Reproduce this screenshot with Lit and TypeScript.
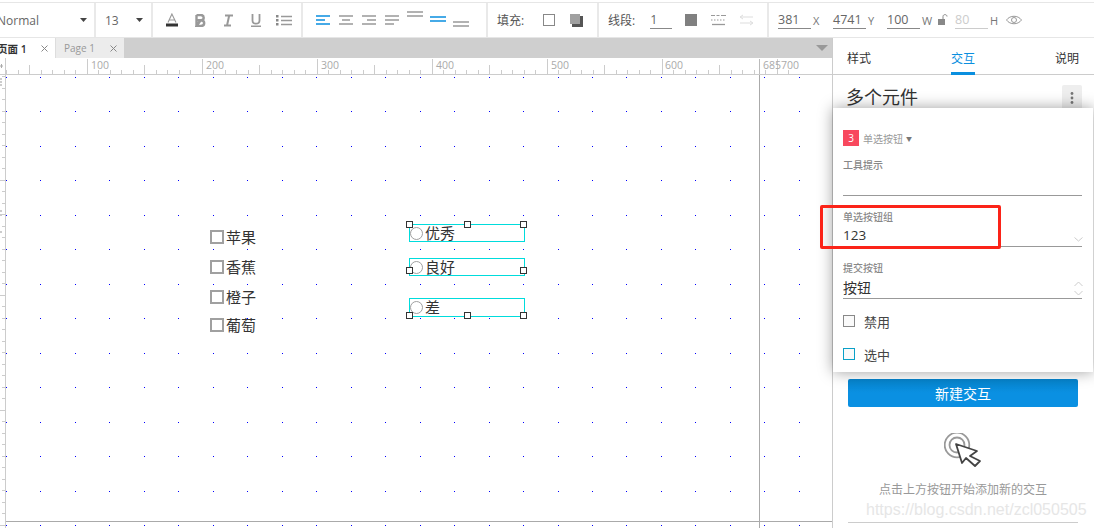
import { LitElement, html, css, svg } from "lit";
import { customElement } from "lit/decorators.js";

const range = (n: number) => Array.from({ length: n }, (_, i) => i);

const checks = [
  { label: "苹果", y: 155 },
  { label: "香蕉", y: 185 },
  { label: "橙子", y: 215 },
  { label: "葡萄", y: 243 },
];
const radios = [
  { label: "优秀", top: 149, h: 18, cy: 158 },
  { label: "良好", top: 183, h: 18, cy: 192 },
  { label: "差", top: 223, h: 19, cy: 232 },
];
const handles: [number, number][] = [
  [403, 149], [461, 149], [517, 149],
  [403, 195], [517, 195],
  [403, 240], [461, 240], [517, 240],
];

@customElement("app-root")
export class AppRoot extends LitElement {
  static styles = css`
    :host { display: block; width: 1094px; height: 528px; overflow: hidden; background: #fff; position: relative;
      font-family: "Open Sans", "Noto Sans CJK SC", sans-serif; color: #444; }
    svg { display: block; flex: none; }

    .toolbar { height: 34px; margin-top: 2px; border-top: 1px solid #e6e6e6; border-bottom: 1px solid #e6e6e6; display: flex; font-size: 12px; color: #666; box-sizing: content-box; }
    .grp { display: flex; align-items: center; border-right: 2px solid #e9e9e9; box-sizing: border-box; flex: none; }
    .g1 { width: 96px; padding-left: 0; }
    .g1 .val { margin-left: -3px; width: 83px; }
    .g2 { width: 57px; padding-left: 9px; }
    .g2 .val { width: 31px; }
    .g3 { width: 150px; padding-left: 5px; }
    .cell28 { width: 28px; display: flex; justify-content: center; }
    .g4 { width: 185px; padding-left: 8px; }
    .cell23 { width: 23px; display: flex; justify-content: center; }
    .g5 { width: 111px; padding-left: 9px; font-size: 12px; color: #555; }
    .g5 .sq1 { margin-left: 19px; }
    .g5 .sq2 { margin-left: 15px; }
    .g6 { width: 170px; padding-left: 9px; color: #555; }
    .num { border-bottom: 1px solid #888; line-height: 15px; height: 16px; margin-top: 1px; width: 33px; flex: none; color: #666; font-size: 12.5px; }
    .g6 .num { margin-left: 15px; width: 22px; }
    .g6 .s1 { margin-left: 13px; }
    .g6 .s2 { margin-left: 14px; }
    .g6 .s3 { margin-left: 13px; }
    .g7 { flex: 1; padding-left: 9px; border-right: 0; }
    .lab { width: 22px; flex: none; font-size: 11px; color: #777; padding-left: 2px; box-sizing: border-box; }
    .lab.y { width: 21px; }
    .lab.w { width: 18px; }
    .num.off { color: #ccc; border-color: #ccc; }
    .g7 .lock { margin-right: 7px; }
    .g7 .lab.h { width: 18px; }

    .main { display: flex; height: 490px; }
    .work { width: 832px; flex: none; display: flex; flex-direction: column; }
    .tabs { height: 20px; background: #cfcfcf; display: flex; flex: none; font-size: 10px; position: relative; }
    .tab { height: 20px; display: flex; align-items: center; box-sizing: border-box; flex: none; }
    .tab.on { width: 56px; background: #fff; color: #333; font-weight: 600; border-right: 1px solid #ddd; font-size: 10.5px; }
    .tab.on .t { margin-left: -3px; width: 44px; }
    .tab.off { width: 68px; background: #ececec; color: #999; padding-left: 8px; }
    .tab.off .t { width: 46px; }
    .menu { margin-left: auto; margin-right: 4px; align-self: center; }
    .ruler-top { flex: none; }
    .body { flex: 1; display: flex; min-height: 0; }
    .ruler-left { flex: none; }
    .stage { flex: 1; position: relative; overflow: hidden; background: #fff; font-size: 15px; color: #333; }
    .grid { position: absolute; left: 0; top: 0; }
    .chk { position: absolute; left: 204px; display: flex; align-items: center; height: 14px; line-height: 14px; }
    .chk i { width: 10px; height: 10px; border: 2px solid #a0a0a0; display: block; margin-right: 2px; }
    .rad { position: absolute; left: 403px; width: 116px; border: 1px solid #00dcdc; box-sizing: border-box; }
    .radio { position: absolute; left: 404px; display: flex; align-items: center; height: 16px; line-height: 16px; }
    .radio i { width: 11px; height: 11px; border: 1.5px solid #a0a0a0; border-radius: 50%; display: block; margin-right: 2px; background: #fff; }
    .hd { position: absolute; width: 5px; height: 5px; background: #fff; border: 1px solid #333; }

    .panel { width: 262px; flex: none; border-left: 1px solid #ccc; box-sizing: border-box; position: relative; }
    .ptabs { height: 37px; display: flex; justify-content: space-between; align-items: flex-end; padding: 0 15px 0 14px; border-bottom: 1px solid #ccc; box-sizing: border-box; font-size: 12px; color: #333; }
    .ptab { height: 29px; line-height: 27px; box-sizing: border-box; }
    .ptab.on { color: #0a8fdf; border-bottom: 3px solid #0a8fdf; margin-bottom: -1px; height: 30px; }
    .ttl { height: 304px; display: flex; align-items: flex-start; justify-content: space-between; padding: 10px 12px 0 13px; box-sizing: border-box; font-size: 18px; color: #333; line-height: 24px; }
    .more { width: 20px; height: 26px; background: #eee; border-radius: 2px; display: flex; align-items: center; justify-content: center; }
    .btn { margin: 0 0 0 15px; width: 230px; height: 28px; border-radius: 2px; background: linear-gradient(#0683cb, #0a90e2 50%); color: #fff; font-size: 14px; display: flex; align-items: center; justify-content: center; }
    .hint { display: flex; flex-direction: column; align-items: center; margin-left: 15px; width: 230px; border-bottom: 1px solid #ccc; height: 116px; box-sizing: border-box; }
    .hint svg { margin: 26px 0 0 2px; }
    .hint .tx { margin-top: 13px; font-size: 12px; color: #999; line-height: 16px; white-space: nowrap; }
    .mark { position: absolute; left: 33px; top: 463px; font: 16px "Liberation Sans", sans-serif; color: #e6e6e6; white-space: nowrap; }

    .pop { position: absolute; left: 0; top: 70px; width: 260px; height: 264px; background: #fff; box-shadow: 0 0 14px rgba(0,0,0,.38); padding: 22px 11px 0 10px; box-sizing: border-box; }
    .head { display: flex; align-items: center; height: 16px; font-size: 10px; color: #999; }
    .badge { width: 16px; height: 16px; background: #f8485e; color: #fff; font-size: 10px; line-height: 16px; text-align: center; margin-right: 4px; }
    .tri { font-size: 6px; margin-left: 3px; color: #777; }
    .cap { font-size: 10px; line-height: 14px; color: #888; font-weight: 500; }
    .tip { margin-top: 11px; padding-top: 1px; height: 37px; border-bottom: 1px solid #999; }
    .f2 { margin-top: 14px; height: 36px; border-bottom: 1px solid #999; position: relative; }
    .f3 { margin-top: 14px; height: 37px; border-bottom: 1px solid #999; position: relative; }
    .v { font-size: 13.5px; color: #333; line-height: 20px; margin-top: 1px; }
    .f3 .v { font-size: 14px; margin-top: 3px; }
    .arrow { position: absolute; right: -1px; bottom: 4px; }
    .f3 .arrow { bottom: 2px; }
    .cb { display: flex; align-items: center; font-size: 13px; color: #444; height: 18px; }
    .cb i { display: block; width: 10px; height: 10px; border: 1px solid #888; background: #fafafa; margin-right: 9px; }
    .cb.blue i { border-color: #0aa0c8; }
    .cb.a { margin-top: 13px; }
    .cb.b { margin-top: 15px; }

    .red { position: absolute; left: 820px; top: 205px; width: 181px; height: 44px; border: 3px solid #fb2318; border-radius: 2px; box-sizing: border-box; }
  `;

  private rulerTop() {
    const ticks = range(72).map((k) => {
      const x = Math.round(-28.3 + 11.5 * k) + 0.5;
      const h = k % 10 === 0 ? 15 : k % 5 === 0 ? 9 : 4;
      return svg`<line x1=${x} x2=${x} y1=${16 - h} y2="16" stroke="#ccc"/>`;
    });
    const nums: [string, number][] = [["100", 91], ["200", 206], ["300", 321], ["400", 436], ["500", 551], ["600", 665], ["685", 763], ["700", 781]];
    return html`<svg class="ruler-top" width="832" height="17">
      <rect x="0" y="16" width="832" height="1" fill="#ccc"/>
      ${ticks}
      <line x1="759.5" x2="759.5" y1="1" y2="16" stroke="#bbb"/>
      <rect x="5" y="0" width="1" height="17" fill="#ccc"/>
      <path d="M0 8h3M1.500 6v4" stroke="#aaa"/>
      ${nums.map(([t, x]) => svg`<text x=${x} y="11" font-size="10.5" fill="#aaa" font-family="Open Sans">${t}</text>`)}
    </svg>`;
  }

  private rulerLeft() {
    const ticks = range(42).map((k) => {
      const y = Math.round(11.5 * k + 1) + 0.5;
      const w = k % 10 === 9 ? 6 : 3;
      return svg`<line x1=${5 - w} x2="5" y1=${y} y2=${y} stroke="#ccc"/>`;
    });
    return html`<svg class="ruler-left" width="6" height="453">
      <rect x="5" width="1" height="453" fill="#ccc"/>
      ${ticks}
      <path d="M0 4h2M0 7h2M0 10h2M0 136h2M0 140h2M0 157h2" stroke="#999"/>
    </svg>`;
  }

  private stageGrid() {
    const dots = [];
    for (const i of range(24)) {
      for (const j of range(14)) {
        dots.push(svg`<rect x=${Math.round(34.47 * i)} y=${Math.round(2 + 34.46 * j)} width="1" height="1" fill="#0000ff"/>`);
      }
    }
    return html`<svg class="grid" width="826" height="453">
      ${dots}
      <rect x="753" y="0" width="1" height="453" fill="#aaa"/>
      <rect x="0" y="446" width="826" height="1" fill="#aaa"/>
    </svg>`;
  }

  private close() {
    return html`<svg width="7" height="7"><path d="M.5.500l6 6M6.500.500l-6 6" stroke="#888"/></svg>`;
  }

  render() {
    return html`
      <div class="toolbar">
        <div class="grp g1">
          <span class="val">Normal</span>
          <svg width="8" height="4"><path d="M0 0h7l-3.500 4z" fill="#444"/></svg>
        </div>
        <div class="grp g2">
          <span class="val">13</span>
          <svg width="8" height="4"><path d="M0 0h7l-3.500 4z" fill="#444"/></svg>
        </div>
        <div class="grp g3">
          <span class="cell28"><svg width="12" height="14"><path d="M2 9.500 5.900 1 10 9.500M3.400 7h5" fill="none" stroke="#999" stroke-width="1.100"/><rect y="10.500" width="12" height="3" fill="#333"/></svg></span>
          <span class="cell28"><svg width="11" height="13"><path d="M1.500 1h4.200c2 0 3 1 3 2.700 0 1.500-1 2.600-3 2.600H1.500M5.700 6.300c2.300 0 3.500 1 3.500 2.700S8 12 5.800 12H1.500zM1.500 1v11" fill="none" stroke="#999" stroke-width="2.400"/></svg></span>
          <span class="cell28"><svg width="11" height="13"><path d="M2 1.500h8M1 11.500h7M6.200 1.500l-2.200 10" fill="none" stroke="#999" stroke-width="2"/></svg></span>
          <span class="cell28"><svg width="10" height="13"><path d="M1.500 0v6.500c0 2 1.300 3.200 3.500 3.200s3.500-1.200 3.500-3.200V0" fill="none" stroke="#999" stroke-width="1.800"/><rect y="11.500" width="10" height="1.500" fill="#999"/></svg></span>
          <span class="cell28"><svg width="16" height="11"><path d="M5 1.500h11M5 5.500h11M5 9.500h11" stroke="#999" stroke-width="1.300"/><path d="M0 0h2.500v2.500H0zM0 4h2.500v2.500H0zM0 8h2.500v2.500H0z" fill="#888"/></svg></span>
        </div>
        <div class="grp g4">
          <span class="cell23"><svg width="14" height="10"><path d="M0 1h14M0 5h9M0 9h14" stroke="#0a8fdf" stroke-width="1.500"/></svg></span>
          <span class="cell23"><svg width="14" height="10"><path d="M0 1h14M3 5h8M0 9h14" stroke="#999" stroke-width="1.500"/></svg></span>
          <span class="cell23"><svg width="14" height="10"><path d="M0 1h14M5 5h9M0 9h14" stroke="#999" stroke-width="1.500"/></svg></span>
          <span class="cell23"><svg width="14" height="10"><path d="M0 1h14M0 5h14M0 9h9" stroke="#999" stroke-width="1.500"/></svg></span>
          <span class="cell23"><svg width="16" height="22"><path d="M0 3h16M0 7h16" stroke="#999" stroke-width="1.500"/></svg></span>
          <span class="cell23"><svg width="16" height="22"><path d="M0 8h16M0 12h16" stroke="#0a8fdf" stroke-width="1.500"/></svg></span>
          <span class="cell23"><svg width="16" height="22"><path d="M0 13h16M0 17h16" stroke="#999" stroke-width="1.500"/></svg></span>
        </div>
        <div class="grp g5">
          <span>填充:</span>
          <svg class="sq1" width="12" height="12"><rect x=".5" y=".5" width="11" height="11" fill="#fff" stroke="#888"/></svg>
          <svg class="sq2" width="13" height="13"><rect x="2" y="2" width="11" height="11" fill="#555"/><rect width="10" height="10" fill="#a0a0a0"/></svg>
        </div>
        <div class="grp g6">
          <span>线段:</span>
          <span class="num">1</span>
          <svg class="s1" width="12" height="12"><rect width="12" height="12" fill="#808080"/></svg>
          <svg class="s2" width="15" height="12"><path d="M0 1.500h4M5.500 1.500h3M10 1.500h5" stroke="#999"/><path d="M0 6h1.500M3 6h1.500M6 6h1.500M9 6h1.500M12 6h1.500" stroke="#999"/><path d="M1 10.500h13" stroke="#999" stroke-width="1.300"/></svg>
          <svg class="s3" width="15" height="12"><path d="M14 3H2M4 1 1 3l3 2M1 9h12M11 7l3 2-3 2" fill="none" stroke="#ddd"/></svg>
        </div>
        <div class="grp g7">
          <span class="num">381</span><span class="lab">X</span>
          <span class="num">4741</span><span class="lab y">Y</span>
          <span class="num">100</span><span class="lab w">W</span>
          <svg class="lock" width="10" height="12"><rect y="5" width="7" height="6" fill="#888"/><path d="M5 5V2.500c0-2.500 4-2.500 4 0" fill="none" stroke="#888"/></svg>
          <span class="num off">80</span><span class="lab h">H</span>
          <svg width="16" height="10"><path d="M.5 5C4 0 12 0 15.500 5 12 10 4 10 .5 5z" fill="none" stroke="#999"/><circle cx="8" cy="5" r="2.500" fill="none" stroke="#999"/></svg>
        </div>
      </div>

      <div class="main">
        <div class="work">
          <div class="tabs">
            <div class="tab on"><span class="t">页面 1</span>${this.close()}</div>
            <div class="tab off"><span class="t">Page 1</span>${this.close()}</div>
            <svg class="menu" width="12" height="6"><path d="M0 0h12L6 6z" fill="#999"/></svg>
          </div>
          ${this.rulerTop()}
          <div class="body">
            ${this.rulerLeft()}
            <div class="stage">
              ${this.stageGrid()}
              ${checks.map((c) => html`<div class="chk" style="top:${c.y}px"><i></i>${c.label}</div>`)}
              ${radios.map((r) => html`<div class="rad" style="top:${r.top}px;height:${r.h}px"></div>`)}
              ${radios.map((r) => html`<div class="radio" style="top:${r.cy - 8}px"><i></i>${r.label}</div>`)}
              ${handles.map(([x, y]) => html`<div class="hd" style="left:${x - 3}px;top:${y - 3}px"></div>`)}
            </div>
          </div>
        </div>

        <div class="panel">
          <div class="ptabs">
            <span class="ptab">样式</span>
            <span class="ptab on">交互</span>
            <span class="ptab">说明</span>
          </div>
          <div class="ttl">
            <span>多个元件</span>
            <span class="more"><svg width="4" height="14"><circle cx="2" cy="2.500" r="1.400" fill="#777"/><circle cx="2" cy="7" r="1.400" fill="#777"/><circle cx="2" cy="11.500" r="1.400" fill="#777"/></svg></span>
          </div>
          <div class="btn">新建交互</div>
          <div class="hint">
            <svg width="40" height="36" viewBox="0 0 40 36">
              <circle cx="13" cy="12" r="12.300" fill="none" stroke="#999" stroke-width="1.800"/>
              <circle cx="13" cy="12" r="7.500" fill="none" stroke="#999" stroke-width="1.800"/>
              <path d="M12 11 33 18 26 23 36 28 31 33 22 25 18 30z" fill="#fff" stroke="#444" stroke-width="1.800" stroke-linejoin="round"/>
            </svg>
            <span class="tx">点击上方按钮开始添加新的交互</span>
          </div>
          <div class="mark">https://blog.csdn.net/zcl050505</div>

          <div class="pop">
            <div class="head"><span class="badge">3</span>单选按钮<span class="tri">▼</span></div>
            <div class="tip"><div class="cap">工具提示</div></div>
            <div class="f2"><div class="cap">单选按钮组</div><div class="v">123</div>
              <svg class="arrow" width="9" height="5"><path d="M.5.500 4.500 4l4-3.500" fill="none" stroke="#ccc"/></svg>
            </div>
            <div class="f3"><div class="cap">提交按钮</div><div class="v">按钮</div>
              <svg class="arrow" width="9" height="15"><path d="M.5 5 4.500 1l4 4M.5 10l4 4 4-4" fill="none" stroke="#ccc"/></svg>
            </div>
            <div class="cb a"><i></i>禁用</div>
            <div class="cb blue b"><i></i>选中</div>
          </div>
        </div>
      </div>
      <div class="red"></div>
    `;
  }
}
